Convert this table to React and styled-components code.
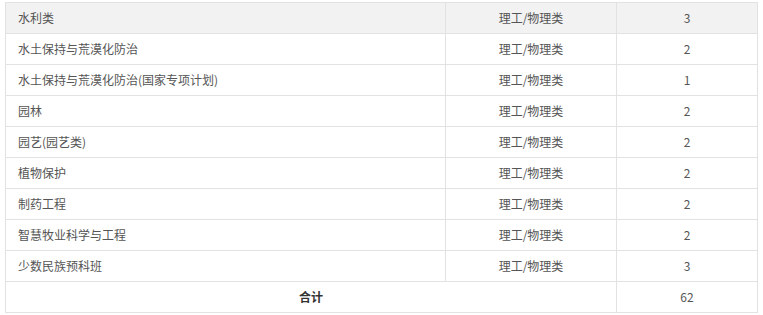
import React from 'react'
import styled, { createGlobalStyle } from 'styled-components'

const GlobalStyle = createGlobalStyle`
  body {
    margin: 0;
    background: #fff;
    font-family: "Microsoft YaHei", "Noto Sans CJK SC", "Liberation Sans", sans-serif;
  }
`

const Wrapper = styled.div`
  padding: 2px 0 0 5px;
`

const Table = styled.table`
  width: 752px;
  border-collapse: collapse;
  table-layout: fixed;
  font-size: 12px;
  color: #555;
`

const Row = styled.tr`
  background: ${(p) => (p.$highlight ? '#f2f2f2' : '#fff')};
`

const Cell = styled.td`
  height: 30px;
  padding: 0 12px;
  border: 1px solid #e2e2e2;
  text-align: ${(p) => p.$align || 'left'};
  font-weight: ${(p) => (p.$bold ? 700 : 400)};
  color: ${(p) => (p.$bold ? '#333' : '#555')};
  line-height: 18px;
  white-space: nowrap;
`

const rows = [
  ['水利类', '理工/物理类', 3],
  ['水土保持与荒漠化防治', '理工/物理类', 2],
  ['水土保持与荒漠化防治(国家专项计划)', '理工/物理类', 1],
  ['园林', '理工/物理类', 2],
  ['园艺(园艺类)', '理工/物理类', 2],
  ['植物保护', '理工/物理类', 2],
  ['制药工程', '理工/物理类', 2],
  ['智慧牧业科学与工程', '理工/物理类', 2],
  ['少数民族预科班', '理工/物理类', 3],
]

const App = () => {
  return (
    <Wrapper>
      <GlobalStyle />
      <Table>
        <colgroup>
          <col style={{ width: 440 }} />
          <col style={{ width: 171 }} />
          <col style={{ width: 141 }} />
        </colgroup>
        <tbody>
          {rows.map(([major, type, count], i) => (
            <Row key={major} $highlight={i === 0}>
              <Cell>{major}</Cell>
              <Cell $align="center">{type}</Cell>
              <Cell $align="center">{count}</Cell>
            </Row>
          ))}
          <Row>
            <Cell colSpan={2} $align="center" $bold>
              合计
            </Cell>
            <Cell $align="center">62</Cell>
          </Row>
        </tbody>
      </Table>
    </Wrapper>
  )
}

export default App
